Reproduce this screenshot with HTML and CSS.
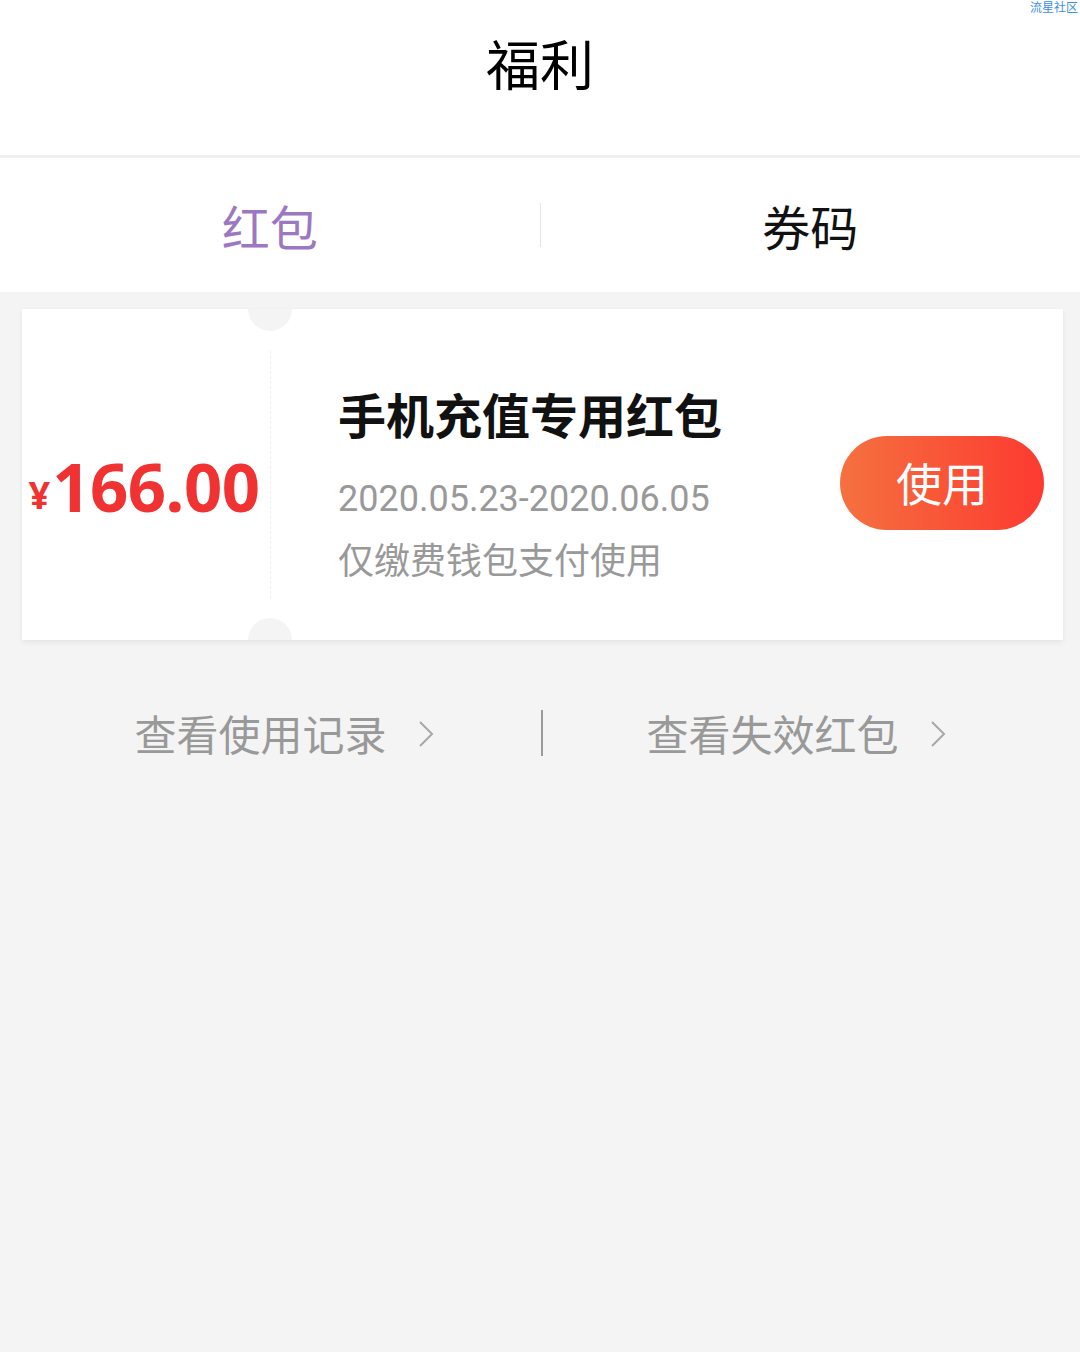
FILE: index.html
```html
<!DOCTYPE html>
<html lang="zh-CN">
<head>
<meta charset="utf-8">
<title>福利</title>
<link rel="stylesheet" href="styles.css">
</head>
<body>
<div class="page">
  <span class="watermark">流星社区</span>
  <header class="header">福利</header>
  <nav class="tabs">
    <div class="tab active">红包</div>
    <div class="tab-divider"></div>
    <div class="tab">券码</div>
  </nav>
  <main class="content">
    <div class="coupon">
      <div class="coupon-left">
        <span class="yen">¥</span><span class="amount">166.00</span>
      </div>
      <div class="coupon-sep">
        <span class="notch notch-top"></span>
        <span class="dash"></span>
        <span class="notch notch-bottom"></span>
      </div>
      <div class="coupon-info">
        <div class="coupon-title">手机充值专用红包</div>
        <div class="coupon-date">2020.05.23-2020.06.05</div>
        <div class="coupon-desc">仅缴费钱包支付使用</div>
      </div>
      <div class="coupon-action">
        <button class="use-btn">使用</button>
      </div>
    </div>
    <div class="links">
      <a class="link">查看使用记录<svg class="chev" viewBox="0 0 16 28" width="16" height="28"><path d="M2 2 L14 14 L2 26" fill="none" stroke="#a8a8a8" stroke-width="2"/></svg></a>
      <span class="links-divider"></span>
      <a class="link">查看失效红包<svg class="chev" viewBox="0 0 16 28" width="16" height="28"><path d="M2 2 L14 14 L2 26" fill="none" stroke="#a8a8a8" stroke-width="2"/></svg></a>
    </div>
  </main>
</div>
</body>
</html>
```
FILE: styles.css
```css
* { box-sizing: border-box; }
html, body { margin: 0; padding: 0; }
body {
  font-family: "Noto Sans CJK SC", "Noto Sans", sans-serif;
  background: #f4f4f4;
}
.page {
  position: relative;
  width: 1080px;
  min-height: 1352px;
  background: #f4f4f4;
}
.watermark {
  position: absolute;
  top: 0;
  right: 2px;
  font-size: 12px;
  line-height: 14px;
  color: #3d8fe0;
}
.header {
  height: 158px;
  background: #fff;
  display: flex;
  justify-content: center;
  align-items: center;
  font-size: 54px;
  color: #000;
  padding-bottom: 30px;
  border-bottom: 3px solid #efefef;
}
.tabs {
  height: 134px;
  background: #fff;
  display: flex;
  align-items: center;
}
.tab {
  flex: 1;
  text-align: center;
  font-size: 48px;
  color: #111;
  line-height: 1;
}
.tab.active { color: #9b78c1; }
.tab-divider {
  width: 1px;
  height: 44px;
  background: #e4e4e4;
}
.content {
  padding: 17px 17px 0 22px;
}
.coupon {
  height: 331px;
  background: #fff;
  display: flex;
  align-items: stretch;
  overflow: hidden;
  box-shadow: 0 3px 6px rgba(0,0,0,0.05), 0 0 3px rgba(0,0,0,0.03);
}
.coupon-left {
  width: 248px;
  display: flex;
  justify-content: center;
  align-items: center;
  padding-top: 22px;
  padding-right: 4px;
  color: #f03232;
  font-family: "Noto Sans", "Open Sans", sans-serif;
  font-weight: 700;
}
.yen { font-size: 38px; margin-right: 2px; margin-top: 16px; }
.amount { font-size: 67px; letter-spacing: -0.5px; }
.coupon-sep {
  position: relative;
  width: 0;
  display: flex;
  justify-content: center;
}
.dash {
  margin-top: 42px;
  height: 248px;
  border-left: 1px dashed #f0f0f0;
}
.notch {
  position: absolute;
  left: -22px;
  width: 44px;
  height: 44px;
  border-radius: 50%;
  background: #f4f4f4;
}
.notch-top { top: -22px; }
.notch-bottom { bottom: -22px; }
.coupon-info {
  flex: 1;
  padding-left: 68px;
  display: flex;
  flex-direction: column;
  justify-content: center;
  padding-top: 16px;
}
.coupon-title {
  font-size: 48px;
  font-weight: 700;
  color: #111;
  line-height: 1;
  margin-bottom: 44px;
}
.coupon-date {
  font-family: Roboto, "Noto Sans", sans-serif;
  font-size: 36px;
  color: #999;
  line-height: 1;
  margin-bottom: 23px;
}
.coupon-desc {
  font-size: 36px;
  color: #999;
  line-height: 1;
}
.coupon-action {
  display: flex;
  align-items: center;
  padding-right: 19px;
  padding-top: 17px;
}
.use-btn {
  width: 204px;
  height: 94px;
  border: none;
  border-radius: 47px;
  background: linear-gradient(90deg, #f5713f 0%, #fd3a31 100%);
  color: #fff;
  font-family: "Noto Sans CJK SC", sans-serif;
  font-size: 46px;
  line-height: 1;
  padding: 0 0 4px;
}
.links {
  margin-top: 70px;
  margin-left: -22px;
  margin-right: -17px;
  display: flex;
  justify-content: center;
  align-items: center;
  padding-left: 0;
}
.link {
  display: flex;
  align-items: center;
  font-size: 42px;
  color: #999;
  line-height: 1;
}
.chev { margin-left: 31px; margin-top: 2px; }
.links-divider {
  width: 2px;
  height: 46px;
  margin: 0 104px 0 107px;
  background: #9a9a9a;
}
```
